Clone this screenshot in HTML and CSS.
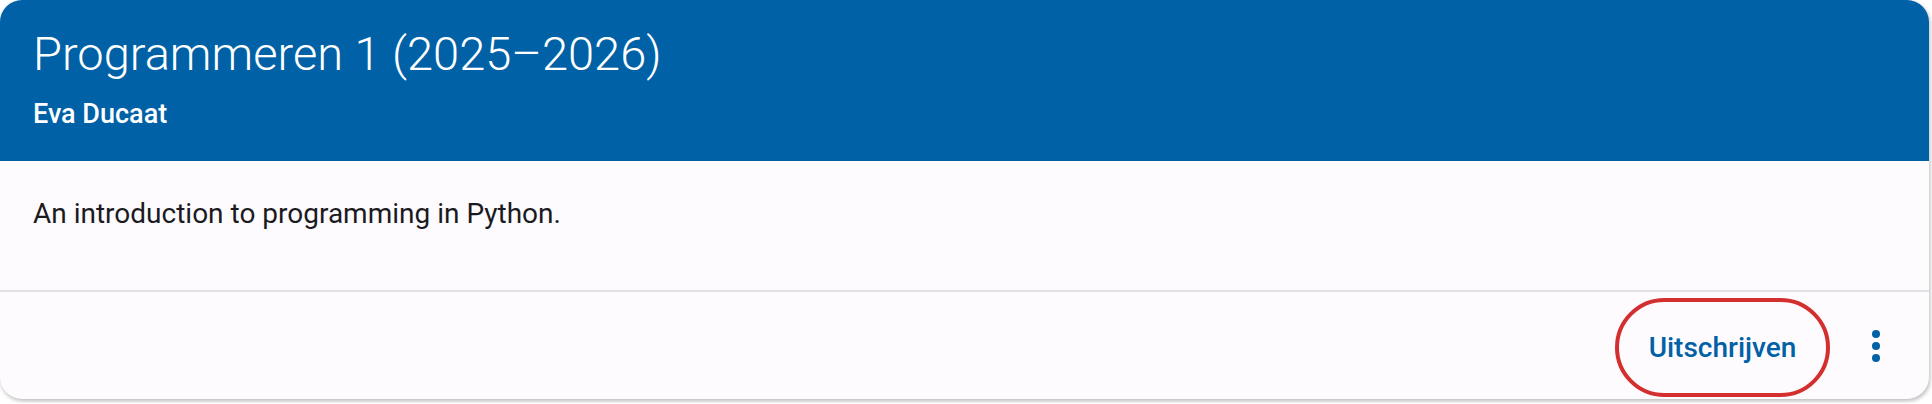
FILE: index.html
```html
<!DOCTYPE html>
<html lang="nl">
<head>
<meta charset="utf-8">
<title>Programmeren 1</title>
<link rel="stylesheet" href="styles.css">
</head>
<body>
<div class="card">
  <div class="card-header">
    <div class="title">Programmeren 1 (2025–2026)</div>
    <div class="subtitle">Eva Ducaat</div>
  </div>
  <div class="card-body">An introduction to programming in Python.</div>
  <div class="divider"></div>
  <div class="card-actions">
    <button class="btn-text">Uitschrijven</button>
    <button class="btn-icon" aria-label="Meer">
      <svg width="10" height="34" viewBox="0 0 10 34"><circle cx="5" cy="5" r="4"/><circle cx="5" cy="17" r="4"/><circle cx="5" cy="29" r="4"/></svg>
    </button>
  </div>
</div>
</body>
</html>
```
FILE: styles.css
```css
html, body {
  margin: 0;
  padding: 0;
  background: #ffffff;
}
body {
  font-family: Roboto, "Liberation Sans", sans-serif;
}
.card {
  margin: 0 3px 4px 0;
  height: 399px;
  box-sizing: border-box;
  border-radius: 22px;
  overflow: hidden;
  background: #fefbff;
  box-shadow: 1px 2px 4px rgba(0, 0, 0, 0.28);
  display: flex;
  flex-direction: column;
}
.card-header {
  background: #0061a6;
  height: 161px;
  box-sizing: border-box;
  padding: 26px 33px 0;
  color: #ffffff;
}
.title {
  font-weight: 300;
  font-size: 47px;
  line-height: 56px;
}
.subtitle {
  margin-top: 15px;
  font-weight: 500;
  font-size: 27px;
  line-height: 34px;
}
.card-body {
  height: 129px;
  box-sizing: border-box;
  padding: 35px 33px 0;
  font-size: 28px;
  line-height: 36px;
  color: #1b1b1f;
}
.divider {
  height: 2px;
  background: #e3e0e5;
}
.card-actions {
  flex: 1;
  display: flex;
  justify-content: flex-end;
  align-items: center;
  padding-right: 29px;
  gap: 22px;
}
.btn-text {
  width: 215px;
  height: 99px;
  box-sizing: border-box;
  border: 4px solid #d32f2f;
  border-radius: 999px;
  background: transparent;
  color: #0061a6;
  font-family: Roboto, "Liberation Sans", sans-serif;
  font-weight: 500;
  font-size: 28px;
  padding: 0;
  margin-top: 4px;
}
.btn-icon {
  width: 48px;
  height: 48px;
  border: none;
  background: transparent;
  padding: 0;
  display: flex;
  align-items: center;
  justify-content: center;
}
.btn-icon svg {
  fill: #0061a6;
}
```
